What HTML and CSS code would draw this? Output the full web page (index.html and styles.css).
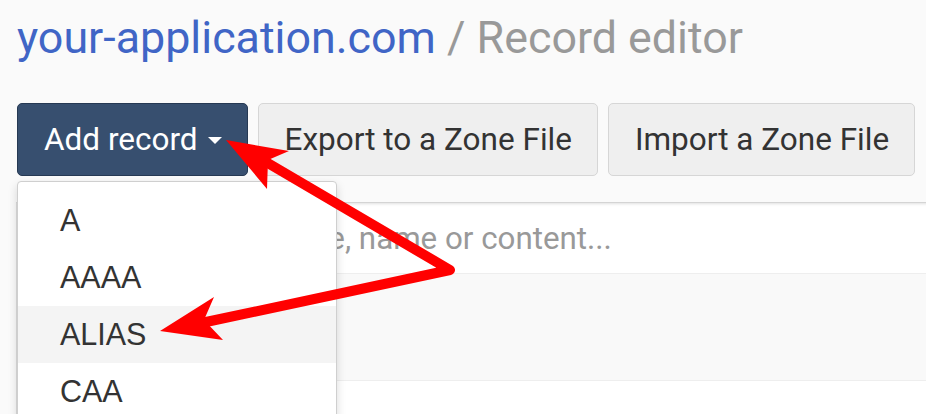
FILE: index.html
```html
<!DOCTYPE html>
<html lang="en">
<head>
<meta charset="utf-8">
<title>Record editor</title>
<link rel="stylesheet" href="styles.css">
</head>
<body>
<div class="page">
  <h1 class="title"><span class="domain">your-application.com</span> <span class="crumb">/ Record editor</span></h1>
  <div class="toolbar">
    <div class="dropdown">
      <button class="btn btn-primary">Add record<span class="caret"></span></button>
      <ul class="menu">
        <li class="menu-item">A</li>
        <li class="menu-item">AAAA</li>
        <li class="menu-item active">ALIAS</li>
        <li class="menu-item">CAA</li>
      </ul>
    </div>
    <button class="btn">Export to a Zone File</button>
    <button class="btn">Import a Zone File</button>
  </div>
  <div class="card">
    <div class="search-row"><input class="search" type="text" placeholder="Filter records by type, name or content..."></div>
    <div class="row shaded"></div>
    <div class="row"></div>
  </div>
</div>
<svg class="annotation" width="926" height="414" viewBox="0 0 926 414">
  <polyline points="266,162 450,270 206,322" fill="none" stroke="#ff0000" stroke-width="10" stroke-linejoin="round" stroke-linecap="round"/>
  <polygon points="226,140 289,151 268,160 267,189" fill="#ff0000"/>
  <polygon points="160,331 214,297 204,320 223,340" fill="#ff0000"/>
</svg>
</body>
</html>
```
FILE: styles.css
```css
html, body {
  margin: 0;
  padding: 0;
}
body {
  background: #fafafa;
  font-family: Roboto, "Liberation Sans", sans-serif;
  width: 926px;
  height: 414px;
  overflow: hidden;
  position: relative;
}
.page {
  padding-left: 17px;
}
.title {
  margin: 0;
  padding-top: 12px;
  font-size: 44.8px;
  line-height: 52px;
  font-weight: 400;
  white-space: nowrap;
}
.domain {
  color: #4065c6;
}
.crumb {
  color: #999999;
}
.toolbar {
  margin-top: 39px;
  display: flex;
  gap: 10px;
}
.dropdown {
  position: relative;
}
.btn {
  height: 73px;
  padding: 0 25px 0 26px;
  border: 1px solid #d6d6d6;
  border-radius: 5px;
  background: #efefef;
  color: #333333;
  font-family: Roboto, sans-serif;
  font-size: 31.5px;
  display: flex;
  align-items: center;
  white-space: nowrap;
}
.btn-primary {
  background: #374f6f;
  border-color: #263953;
  color: #ffffff;
}
.caret {
  display: inline-block;
  width: 0;
  height: 0;
  margin-left: 10px;
  margin-top: 2px;
  border-top: 7px solid #ffffff;
  border-left: 7px solid transparent;
  border-right: 7px solid transparent;
}
.menu {
  position: absolute;
  top: 78px;
  left: 0;
  width: 318px;
  margin: 0;
  padding: 10px 0;
  list-style: none;
  background: #ffffff;
  border: 1px solid #cfcfcf;
  border-radius: 4px;
  box-shadow: 0 4px 10px rgba(0, 0, 0, 0.15);
  z-index: 5;
}
.menu-item {
  height: 57px;
  line-height: 57px;
  padding-left: 42px;
  font-family: "Liberation Sans", Arial, sans-serif;
  font-size: 30.5px;
  color: #333333;
}
.menu-item.active {
  background: #f4f4f4;
}
.card {
  margin-top: 26px;
  margin-left: -1px;
  margin-right: -20px;
  background: #ffffff;
  border: 1px solid #dddddd;
  border-top-color: #d4d4d4;
  box-shadow: inset 0 3px 3px -2px rgba(0, 0, 0, 0.12);
}
.search-row {
  height: 70px;
  display: flex;
  align-items: center;
  border-bottom: 1px solid #eeeeee;
}
.search {
  width: 100%;
  border: none;
  outline: none;
  background: transparent;
  padding: 0 0 0 38px;
  font-family: Roboto, sans-serif;
  font-size: 31.3px;
  color: #333333;
}
.search::placeholder {
  color: #999999;
}
.row {
  height: 106px;
  border-bottom: 1px solid #eeeeee;
}
.row.shaded {
  background: #f9f9f9;
}
.annotation {
  position: absolute;
  top: 0;
  left: 0;
  pointer-events: none;
  z-index: 10;
}
```
